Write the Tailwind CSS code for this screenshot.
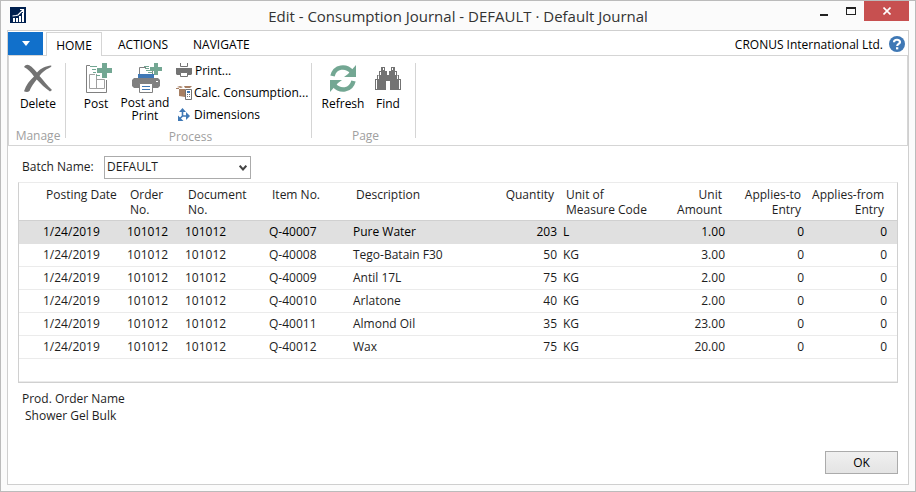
<!DOCTYPE html>
<html lang="en">
<head>
<meta charset="utf-8">
<title>Edit - Consumption Journal</title>
<script src="https://cdn.jsdelivr.net/npm/@tailwindcss/browser@4"></script>
</head>
<body class="min-h-screen flex flex-col border border-[#bbbbbb] bg-[#fbfbfb] px-[6px] pb-[6px] font-['Open_Sans','Noto_Sans',sans-serif] text-[12px] leading-[15px] text-[#1e1e1e]">
<header class="flex h-[29px] items-start">
  <div class="flex w-[99px] shrink-0 pl-[3px] pt-[6px]">
    <svg width="16" height="16" viewBox="0 0 16 16" aria-hidden="true">
      <path fill="#00204f" d="M0 0h16v16H0z"/>
      <path fill="#fff" d="M3 11h2v4H3zM6 11h2v4H6zM9 9h2v6H9zM12 6h2v9h-2z"/>
      <path fill="none" stroke="#fff" stroke-width="1.2" d="M2.500 9l3.500-.5L8 8l5-5M10 2.500h3.500V6"/>
    </svg>
  </div>
  <h1 class="flex-1 pt-[5px] text-center text-[15px] leading-[20px] text-[#333333]">Edit - Consumption Journal - DEFAULT · Default Journal</h1>
  <div class="flex shrink-0">
    <button aria-label="Minimize" class="flex h-[20px] w-[28px] items-center justify-center"><svg width="8" height="20" aria-hidden="true"><path fill="#222" d="M0 13h8v2H0z"/></svg></button>
    <button aria-label="Maximize" class="flex h-[20px] w-[26px] items-center justify-center"><svg width="10" height="20" aria-hidden="true"><path fill="#222" fill-rule="evenodd" d="M0 6h10v8H0zM1 8v5h8V8z"/></svg></button>
    <button aria-label="Close" class="flex h-[20px] w-[45px] items-center justify-center bg-[#c75050]"><svg width="8" height="8" viewBox="0 0 8 8" aria-hidden="true"><path stroke="#fff" stroke-width="1.600" d="M.5.5l7 7M7.500.5l-7 7"/></svg></button>
  </div>
</header>
<main class="flex flex-1 flex-col border border-[#cfcfcf] bg-white">
  <nav class="flex h-[25px] items-stretch border-b border-[#d5d5d5] text-black">
    <button aria-label="Application menu" class="mt-[1px] mr-[3px] flex w-[35px] items-center justify-center bg-[#1170cb]"><svg width="8" height="5" aria-hidden="true"><path fill="#fff" d="M0 0h8L4 5z"/></svg></button>
    <a href="#home" class="-mb-px mt-[1px] flex w-[56px] items-center justify-center border border-b-0 border-[#d5d5d5] bg-white pt-[1px]">HOME</a>
    <a href="#actions" class="ml-[16px] flex items-center pt-[3px]">ACTIONS</a>
    <a href="#navigate" class="ml-[25px] flex items-center pt-[3px]">NAVIGATE</a>
    <span class="ml-auto flex items-center pt-[3px]">CRONUS International Ltd.</span>
    <button aria-label="Help" class="ml-[6px] mr-[3px] flex items-center pt-[2px]"><svg width="16" height="16" viewBox="0 0 16 16" aria-hidden="true"><circle cx="8" cy="8" r="8" fill="#3f78b5"/><path fill="none" stroke="#fff" stroke-width="2.200" d="M5 6.200C5 3 11 3 11 6c0 2-2.800 1.900-2.800 4"/><path fill="#fff" d="M7 11.200h2.300v2.200H7z"/></svg></button>
  </nav>
  <section aria-label="Ribbon" class="flex items-start border-x border-b border-[#d5d5d5] pt-[7px] pb-[1px] text-black">
    <div class="flex h-[81px] w-[56px] flex-col">
      <div class="flex flex-1 items-start justify-center pl-[2px]">
        <button class="flex flex-col items-center gap-[1px]">
          <svg width="32" height="32" viewBox="0 0 32 32" aria-hidden="true"><path fill="#737373" d="M2 4C5-.5 9 2.500 15 9.500 19 5 24 3 29 2.500 30 3 29 4 28 4.500 23 7 20.500 9 17.500 13c4 4.500 7 8.500 12.500 14l-2 1.500C23 25 19 21 14.700 16.500 12 20 9 24 7.500 28c-2 1.500-4 .8-5.500.2C4 22 8 17 12 13.500 9 9.500 6 6 2 4z"/></svg>
          <span>Delete</span>
        </button>
      </div>
      <div class="pb-[1px] pl-[2px] text-center text-[#a0a0a0]">Manage</div>
    </div>
    <div class="h-[75px] w-px bg-[#d5d5d5]"></div>
    <div class="flex h-[81px] w-[245px] flex-col">
      <div class="flex flex-1 items-start">
        <button class="ml-[8px] flex w-[44px] flex-col items-center gap-[1px]">
          <svg width="32" height="32" viewBox="0 0 32 32" aria-hidden="true"><path fill="none" stroke="#808080" d="M10 2.500H6.500v27h20V17"/><path fill="none" stroke="#a0a0a0" d="M15 11.500H9.500v14H24.500v-9h-8V11M16.500 16v9.500"/><path fill="#73a793" d="M22 0h5v5h5v5h-5v5h-5v-5h-5V5h5zM10 3h7v1h-7zM12 6h4v1h-4zM13 9h3v1h-3zM16 12h4v1h-4z"/></svg>
          <span>Post</span>
        </button>
        <button class="flex w-[54px] flex-col items-center gap-[1px]">
          <svg width="32" height="32" viewBox="0 0 32 32" class="overflow-visible" aria-hidden="true"><path fill="#808080" d="M3 17l2-2h4v-4h16v4h4l2 2v6l-2 2H5l-2-2z"/><path fill="#fff" stroke="#808080" d="M10.500 11V4.500h13V11"/><path fill="#fff" stroke="#808080" d="M10.500 20.500h13v9h-13z"/><path fill="#fff" d="M17 3h8v4h-8z"/><path fill="#3f78b5" d="M9 11h16v4H9zM13 23h8v1h-8zM13 26h8v1h-8z"/><path fill="#fff" d="M27 18h2v1h-2z"/><path fill="#73a793" d="M25 0h4v4h4v4h-4v4h-4V8h-4V4h4zM15 3h5v1h-5zM16 5h4v1h-4zM17 7h4v1h-4zM19 9h5v1h-5z"/></svg>
          <span class="leading-[13px]">Post and<br>Print</span>
        </button>
        <div class="ml-[4px] flex flex-col items-start">
          <button class="flex h-[22px] items-start gap-[3px]"><svg width="16" height="16" viewBox="0 0 16 16" aria-hidden="true"><path fill="#737373" d="M0 5h16v6l-1 1h-3v-2H4v2H1l-1-1z"/><path fill="#fff" stroke="#737373" d="M4.500-.5h7v4h-7zM4.500 9.500h7v4h-7z"/></svg>Print...</button>
          <button class="flex h-[22px] items-start gap-[2px]"><svg width="16" height="16" viewBox="0 0 16 16" aria-hidden="true"><path fill="#a77f63" d="M1 2l3-1 3 1-2 1zM8 1h8l-2 2H9zM0 3h3v1H0zM3 4h6v8l-6-1z"/><path fill="#fff" stroke="#737373" d="M9.500 4.500h6v10h-6z"/><path fill="#3f78b5" d="M11 6h3v2h-3z"/><path fill="#737373" d="M11 9h1v1h-1zM13 9h1v1h-1zM11 11h1v1h-1zM13 11h1v1h-1z"/></svg>Calc. Consumption...</button>
          <button class="flex h-[22px] items-start gap-[2px]"><svg width="16" height="16" viewBox="0 0 16 16" aria-hidden="true"><path fill="none" stroke="#3f78b5" stroke-width="1.600" d="M6.500 3v6L3 12.500M6.500 9H11"/><path fill="#3f78b5" d="M6.500 1L10 5H3zM14 9l-4-4v8zM2 14V8.500L7.500 14z"/></svg>Dimensions</button>
        </div>
      </div>
      <div class="pb-[1px] pl-[4px] text-center text-[#a0a0a0]">Process</div>
    </div>
    <div class="h-[75px] w-px bg-[#d5d5d5]"></div>
    <div class="flex h-[81px] w-[103px] flex-col">
      <div class="flex flex-1 items-start">
        <button class="ml-[7px] flex w-[48px] flex-col items-center gap-[1px]">
          <svg width="32" height="32" viewBox="0 0 32 32" aria-hidden="true"><path fill="none" stroke="#73a793" stroke-width="4.500" d="M5.500 13C8 3 19 2 25 9M26.500 18C24 28 13 29 7 22"/><path fill="#73a793" d="M29 2v12H17l4-3zM3 29V17h12l-4 3z"/></svg>
          <span>Refresh</span>
        </button>
        <button class="flex w-[42px] flex-col items-center gap-[1px]">
          <svg width="32" height="32" viewBox="0 0 32 32" aria-hidden="true"><path fill="#737373" d="M9 4h4v4h2v4h2V8h2V4h4v4h2v4h2v4h2v11H18v-9h-4v9H3V16h2v-4h2V8h2z"/><path fill="none" stroke="#fff" d="M4.500 26v-9M6.500 16v-3.500M8.500 12V9M11.500 7V5M20.500 7V5M23.500 12V9M25.500 16v-3.500M27.500 26v-9"/></svg>
          <span>Find</span>
        </button>
      </div>
      <div class="pb-[1px] pl-[4px] text-center text-[#a0a0a0]">Page</div>
    </div>
    <div class="h-[75px] w-px bg-[#d5d5d5]"></div>
  </section>
  <div class="flex items-center px-[14px] pt-[10px]">
    <label for="batch" class="w-[82px] pb-[2px]">Batch Name:</label>
    <div class="relative w-[147px]">
      <select id="batch" class="block h-[23px] w-full appearance-none border border-[#ababab] bg-white pl-[2px] pb-[2px]"><option>DEFAULT</option></select>
      <svg width="8" height="6" class="pointer-events-none absolute right-[4px] top-[9px]" aria-hidden="true"><path fill="none" stroke="#444" stroke-width="2" d="M.7.7L4 4.500 7.300.7"/></svg>
    </div>
  </div>
  <div class="mx-[10px] mt-[3px] border border-t-[#ebebeb] border-[#d0d0d0]">
    <table class="w-full table-fixed border-separate border-spacing-0 text-left [&_td]:h-[23px] [&_td]:border-b [&_td]:border-[#ebebeb] [&_td]:px-[3px] [&_td]:pt-0 [&_td]:pb-[2px] [&_td]:whitespace-nowrap [&_th]:h-[38px] [&_th]:border-b [&_th]:border-[#d0d0d0] [&_th]:px-[6px] [&_th]:pt-[4px] [&_th]:pb-0 [&_th]:align-top [&_th]:font-normal [&_th]:whitespace-nowrap">
      <colgroup><col class="w-[21px]"><col class="w-[84px]"><col class="w-[58px]"><col class="w-[84px]"><col class="w-[84px]"><col><col class="w-[85px]"><col class="w-[99px]"><col class="w-[69px]"><col class="w-[79px]"><col class="w-[83px]"><col class="w-[7px]"></colgroup>
      <thead><tr><th></th><th>Posting Date</th><th>Order<br>No.</th><th>Document<br>No.</th><th>Item No.</th><th>Description</th><th class="text-right">Quantity</th><th>Unit of<br>Measure Code</th><th class="text-right">Unit<br>Amount</th><th class="text-right">Applies-to<br>Entry</th><th><div class="flex flex-col items-end"><span>Applies-from</span><span>Entry</span></div></th><th></th></tr></thead>
      <tbody>
        <tr class="bg-[#e0e0e0] text-black [&>td]:border-[#e0e0e0]"><td></td><td>1/24/2019</td><td>101012</td><td>101012</td><td>Q-40007</td><td>Pure Water</td><td class="text-right">203</td><td>L</td><td class="text-right">1.00</td><td class="text-right">0</td><td class="text-right">0</td><td></td></tr>
        <tr><td></td><td>1/24/2019</td><td>101012</td><td>101012</td><td>Q-40008</td><td>Tego-Batain F30</td><td class="text-right">50</td><td>KG</td><td class="text-right">3.00</td><td class="text-right">0</td><td class="text-right">0</td><td></td></tr>
        <tr><td></td><td>1/24/2019</td><td>101012</td><td>101012</td><td>Q-40009</td><td>Antil 17L</td><td class="text-right">75</td><td>KG</td><td class="text-right">2.00</td><td class="text-right">0</td><td class="text-right">0</td><td></td></tr>
        <tr><td></td><td>1/24/2019</td><td>101012</td><td>101012</td><td>Q-40010</td><td>Arlatone</td><td class="text-right">40</td><td>KG</td><td class="text-right">2.00</td><td class="text-right">0</td><td class="text-right">0</td><td></td></tr>
        <tr><td></td><td>1/24/2019</td><td>101012</td><td>101012</td><td>Q-40011</td><td>Almond Oil</td><td class="text-right">35</td><td>KG</td><td class="text-right">23.00</td><td class="text-right">0</td><td class="text-right">0</td><td></td></tr>
        <tr><td></td><td>1/24/2019</td><td>101012</td><td>101012</td><td>Q-40012</td><td>Wax</td><td class="text-right">75</td><td>KG</td><td class="text-right">20.00</td><td class="text-right">0</td><td class="text-right">0</td><td></td></tr>
        <tr><td colspan="12"></td></tr>
      </tbody>
    </table>
  </div>
  <dl class="px-[14px] pt-[7px] leading-[17px]"><dt>Prod. Order Name</dt><dd class="pl-[3px]">Shower Gel Bulk</dd></dl>
  <div class="mt-auto flex justify-end px-[10px] pb-[10px]">
    <button class="h-[23px] w-[73px] border border-[#ababab] bg-linear-to-b from-[#f0f0f0] to-[#e4e4e4] text-black">OK</button>
  </div>
</main>
</body>
</html>
